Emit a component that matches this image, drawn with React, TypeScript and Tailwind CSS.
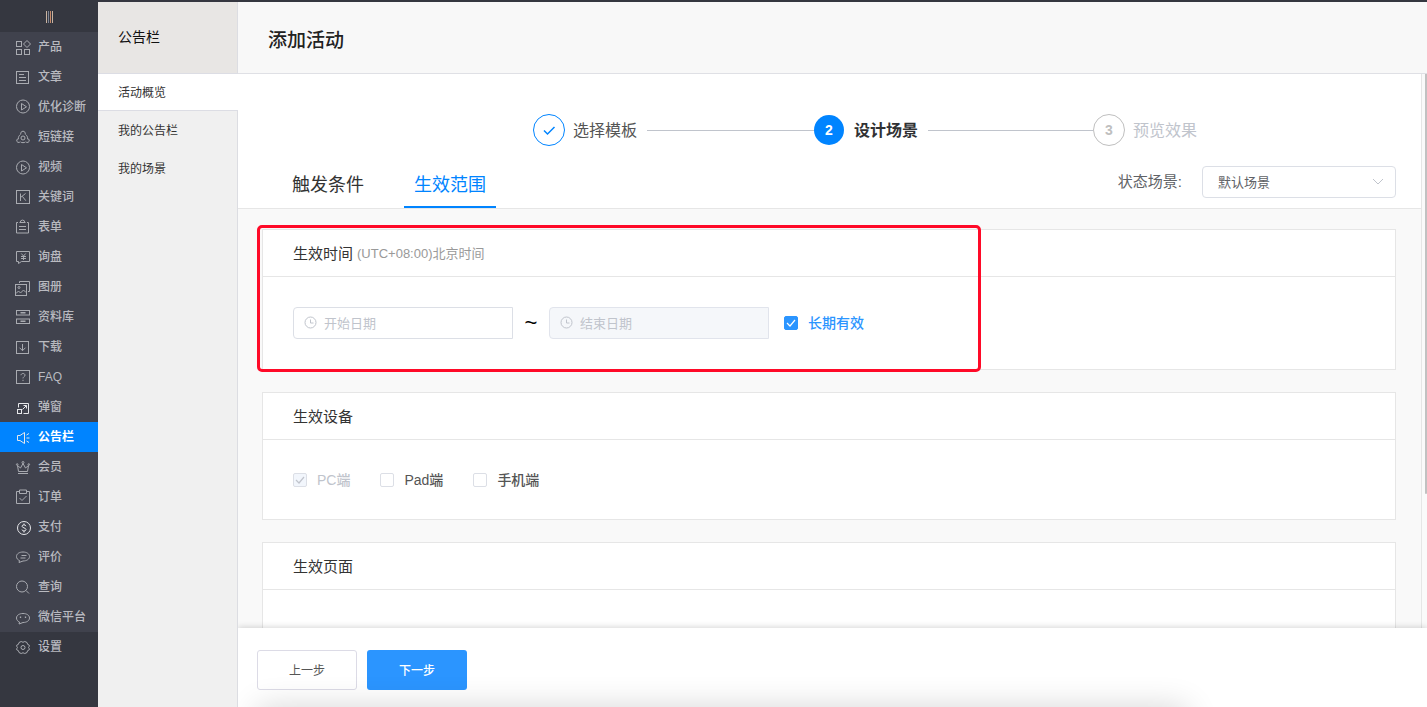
import { useState } from "react";
import type { ReactNode } from "react";

type NavItem = { label: string; icon: ReactNode; bright?: boolean };

const play = (
  <>
    <circle cx="8" cy="7.5" r="6.5" />
    <path d="M6.500 4.500v6.500l5-3.200z" />
  </>
);

const navItems: NavItem[] = [
  {
    label: "产品",
    icon: (
      <>
        <rect x="1.5" y="2.5" width="5" height="5" />
        <rect x="1.5" y="10.5" width="5" height="5" />
        <rect x="9.5" y="10.5" width="5" height="5" />
        <path d="M12 1.500l3.500 3.500-3.500 3.500L8.500 5z" />
      </>
    ),
  },
  {
    label: "文章",
    icon: (
      <>
        <rect x="1.5" y="2.5" width="12" height="12" />
        <path d="M4 5.500h5M4 8.500h7M4 11.500h7" />
      </>
    ),
  },
  { label: "优化诊断", icon: play },
  {
    label: "短链接",
    icon: (
      <>
        <circle cx="8" cy="9" r="2" />
        <path d="M5.800 5.200a2.300 2.300 0 1 1 4.400 0M5.500 5.500C4 6.500 3.300 8 3.400 9.500M10.500 5.500c1.500 1 2.200 2.500 2.100 4M5.700 13.200c1.400.6 3.200.6 4.600 0M4 9.700A1.900 1.900 0 1 0 5.300 12.500M12 9.700a1.900 1.900 0 1 1-1.300 2.800" />
      </>
    ),
  },
  { label: "视频", icon: <g transform="translate(0 1)">{play}</g> },
  {
    label: "关键词",
    icon: (
      <>
        <rect x="1.5" y="1.5" width="13" height="13" />
        <path d="M5.500 4.500v7.500M10.500 4.500L5.800 8.300M7.300 7.300l3.500 4.400" />
      </>
    ),
  },
  {
    label: "表单",
    icon: (
      <path d="M3 3.500H1.500v10.500h12V3.500H12M4.500 3.500h6M5.300 3.300a2.200 2.200 0 0 1 4.400 0M4 7.500h7M4 10.500h7" />
    ),
  },
  {
    label: "询盘",
    icon: (
      <>
        <path d="M1.500 2.500h13v10H6.500L3.500 14.500v-2h-2z" />
        <path d="M6.300 4.500L8.500 7l2.200-2.500M8.500 7v4M6 7.500h5M6 9.500h5" />
      </>
    ),
  },
  {
    label: "图册",
    icon: (
      <>
        <rect x="0.5" y="5.5" width="11" height="11" />
        <path d="M4.500 4V2.500h10v10H13M1 14.500l2.500-2.500 2 2 3-3 2.500 2.500" />
        <circle cx="4" cy="8.500" r="1" />
      </>
    ),
  },
  {
    label: "资料库",
    icon: (
      <>
        <rect x="1.5" y="1.5" width="13" height="4.500" />
        <rect x="1.5" y="10" width="13" height="4.500" />
        <path d="M5.500 3.800h5M5.500 12.200h5" strokeWidth="1.5" />
      </>
    ),
  },
  {
    label: "下载",
    icon: (
      <>
        <rect x="1.5" y="2.5" width="12" height="12" />
        <path d="M7.500 5v6.500M4.500 8.700l3 3 3-3" />
      </>
    ),
  },
  {
    label: "FAQ",
    icon: (
      <>
        <rect x="1.5" y="1.5" width="13" height="13" />
        <path d="M6 6.200c0-2.300 4-2.300 4 0 0 1.400-2 1.500-2 3.200M8 10.800V12" />
      </>
    ),
  },
  {
    label: "弹窗",
    bright: true,
    icon: (
      <>
        <rect x="2.5" y="10.5" width="4" height="4" />
        <path d="M3.500 8.500v-4h10v10h-5M7.500 10.500l4-4M8.500 6.500h3V9.500" />
      </>
    ),
  },
  {
    label: "公告栏",
    bright: true,
    icon: (
      <path d="M2.500 6.500v5h2.500l4.500 3V3.500L5 6.500zM11.500 6l2.500-1.500M11.500 9h3M11.500 12l2.500 1.500" />
    ),
  },
  {
    label: "会员",
    icon: (
      <>
        <path d="M3.500 12.500l-1-6 3 2.500L8 4.500 10.500 9l3-2.500-1 6zM3 14.500h10" />
        <circle cx="8" cy="3.500" r="1" />
        <circle cx="2.200" cy="5.500" r="0.800" />
        <circle cx="13.800" cy="5.500" r="0.800" />
      </>
    ),
  },
  {
    label: "订单",
    icon: (
      <path d="M4.500 2.500h-3v12h13v-12h-3M4.500 1h7v3.500h-7zM4.500 9l2.500 2.500L11.500 7" />
    ),
  },
  {
    label: "支付",
    bright: true,
    icon: (
      <>
        <circle cx="9" cy="9" r="6.500" />
        <path d="M11 7.200c-.2-1.800-4-1.800-4 0s4 1.500 4 3.400-4 1.800-4 0M9 4.500v1.300M9 12v1.500" />
      </>
    ),
  },
  {
    label: "评价",
    icon: (
      <path d="M4.500 11.500C2.600 10.800 1.500 9.300 1.500 7.500c0-2.700 2.800-4.500 6.500-4.500s6.500 1.800 6.500 4.500-2.800 4.500-6.500 4.500L4 13.500zM6.500 6.500h5M5.500 9h5" />
    ),
  },
  {
    label: "查询",
    icon: (
      <>
        <circle cx="7" cy="7.500" r="5.500" />
        <path d="M11 11.500l3 3" />
      </>
    ),
  },
  {
    label: "微信平台",
    icon: (
      <>
        <path d="M4.500 13C2.600 12.300 1.500 10.800 1.500 9c0-2.700 2.800-4.500 6.500-4.500s6.500 1.800 6.500 4.500-2.800 4.500-6.500 4.500L4 15z" />
        <path d="M5.500 7.500v1.500M10.500 7.500v1.500" strokeWidth="1.300" />
      </>
    ),
  },
  {
    label: "设置",
    icon: (
      <>
        <path d="M6.200 2.500Q8 4 9.800 2.500L12 3.500Q12 5.800 14.300 6.200V7.200Q12.800 8.500 14.300 9.800V10.800Q12 11.200 12 13.500L9.800 14.500Q8 13 6.200 14.500L4 13.500Q4 11.200 1.700 10.800V9.800Q3.200 8.500 1.700 7.200V6.200Q4 5.800 4 3.500Z" />
        <circle cx="8" cy="8.500" r="2" />
      </>
    ),
  },
];

function SideIcon({ children }: { children: ReactNode }) {
  return (
    <svg viewBox="0 0 16 16" className="size-4 shrink-0 overflow-visible" fill="none" stroke="currentColor" strokeWidth="1" aria-hidden="true">
      {children}
    </svg>
  );
}

function SideNav() {
  return (
    <nav className="flex w-[98px] shrink-0 flex-col bg-[#353740] text-xs font-medium text-[#b9bac0]">
      <button type="button" aria-label="菜单" className="flex h-[30px] items-center justify-center gap-px">
        <span className="h-3 w-px bg-[#c9b3a0]" />
        <span className="h-3 w-px bg-[#7d8596]" />
        <span className="h-3 w-px bg-[#c88a6a]" />
        <span className="h-3 w-px bg-[#c9b3a0]" />
      </button>
      {navItems.map((item) => {
        const active = item.label === "公告栏";
        const last = item.label === "设置";
        return (
          <a
            key={item.label}
            href="#"
            className={
              active
                ? "flex h-[30px] items-center gap-[7px] bg-[#0084ff] pl-[15px] font-bold text-white"
                : last
                  ? "flex h-[30px] items-center gap-[7px] pl-[15px]"
                  : "flex h-[30px] items-center gap-[7px] bg-[#40424d] pl-[15px]"
            }
          >
            <span className={item.bright ? "text-[#e6e7ea]" : "text-[#a9abb1]"}>
              <SideIcon>{item.icon}</SideIcon>
            </span>
            {item.label}
          </a>
        );
      })}
    </nav>
  );
}

function SubNav() {
  return (
    <aside className="flex w-[140px] shrink-0 flex-col border-r border-[#dcdde2] bg-[#f0f0f0] text-xs text-[#333]">
      <h2 className="flex h-[72px] items-center border-b border-[#dcdde4] bg-[#e8e6e4] pb-0.5 pl-5 text-sm text-[#111]">公告栏</h2>
      <a href="#" className="-mr-px flex h-[37px] items-center border-b border-[#dcdde4] bg-white pt-0.5 pl-5">
        活动概览
      </a>
      <a href="#" className="flex h-[38px] items-center pt-0.5 pl-5">
        我的公告栏
      </a>
      <a href="#" className="flex h-[38px] items-center pt-0.5 pl-5">
        我的场景
      </a>
    </aside>
  );
}

function Steps() {
  return (
    <ol className="flex items-center justify-center pt-10 pl-[71px] text-base">
      <li className="flex items-center">
        <span className="flex size-8 items-center justify-center rounded-full border border-[#0084ff] text-[#0084ff]">
          <svg viewBox="0 0 14 14" className="size-3.5" fill="none" stroke="currentColor" strokeWidth="1.5" aria-hidden="true">
            <path d="M2 7.500l3.500 3.500L12.500 4" />
          </svg>
        </span>
        <span className="ml-2 pt-0.5 text-[#555]">选择模板</span>
        <span className="ml-2.5 h-px w-[167px] bg-[#c0c4cc]" />
      </li>
      <li className="flex items-center">
        <span className="flex size-[30px] items-center justify-center rounded-full bg-[#0084ff] text-sm font-bold text-white">2</span>
        <span className="ml-2.5 pt-0.5 font-bold text-[#303133]">设计场景</span>
        <span className="ml-2.5 h-px w-[165px] bg-[#c0c4cc]" />
      </li>
      <li className="flex items-center">
        <span className="flex size-8 items-center justify-center rounded-full border border-[#bfbfbf] text-sm font-bold text-[#bfbfbf]">3</span>
        <span className="ml-2 pt-0.5 text-[#c0c4cc]">预览效果</span>
      </li>
    </ol>
  );
}

function Card({ title, note, children }: { title: string; note?: string; children?: ReactNode }) {
  return (
    <section className="relative border border-[#e6e6e6] bg-white">
      <h3 className="flex h-[47px] items-center gap-1 border-b border-[#e6e6e6] pt-0.5 pl-[30px] text-[15px] text-[#333]">
        {title}
        {note && <span className="text-[13px] text-[#999]">{note}</span>}
      </h3>
      {children}
    </section>
  );
}

function DateField({ label, disabled }: { label: string; disabled?: boolean }) {
  return (
    <label
      className={
        disabled
          ? "flex h-8 w-[220px] items-center gap-1.5 rounded-l border border-[#e1e4ec] bg-[#f5f7fa] pl-2.5"
          : "flex h-8 w-[220px] items-center gap-1.5 rounded-l border border-[#dcdfe6] bg-white pl-2.5"
      }
    >
      <svg viewBox="0 0 14 14" className="size-3.5 shrink-0 text-[#c0c4cc]" fill="none" stroke="currentColor" aria-hidden="true">
        <circle cx="6.500" cy="6.500" r="5.500" />
        <path d="M6.500 3.500v3.500h3" />
      </svg>
      <input
        type="text"
        aria-label={label}
        placeholder={label}
        disabled={disabled}
        className="min-w-0 flex-1 bg-transparent pt-0.5 text-[13px] text-[#606266] outline-none placeholder:text-[#c0c4cc]"
      />
    </label>
  );
}

function Check({ label, initial, disabled, accent }: { label: string; initial?: boolean; disabled?: boolean; accent?: boolean }) {
  const [on, setOn] = useState(Boolean(initial));
  return (
    <label
      className={
        disabled
          ? "flex items-center gap-2.5 text-sm font-medium text-[#c0c4cc]"
          : accent
            ? "flex items-center gap-2.5 text-sm font-medium text-[#2b95ff]"
            : "flex items-center gap-2.5 text-sm font-medium text-[#555]"
      }
    >
      <span className="relative flex size-3.5">
        <input
          type="checkbox"
          checked={on}
          disabled={disabled}
          onChange={(e) => setOn(e.target.checked)}
          className="size-3.5 appearance-none rounded-[2px] border border-[#dcdfe6] bg-white enabled:checked:border-[#2b95ff] enabled:checked:bg-[#2b95ff] disabled:bg-[#f2f6fc]"
        />
        {on && (
          <svg
            viewBox="0 0 14 14"
            className={disabled ? "pointer-events-none absolute inset-0 text-[#c0c4cc]" : "pointer-events-none absolute inset-0 text-white"}
            fill="none"
            stroke="currentColor"
            strokeWidth="1.2"
            aria-hidden="true"
          >
            <path d="M3 7l3 3 5-6" />
          </svg>
        )}
      </span>
      {label}
    </label>
  );
}

export default function App() {
  return (
    <div className="flex h-screen flex-col overflow-hidden bg-white font-['Liberation_Sans','Noto_Sans_CJK_SC',sans-serif]">
      <div className="h-0.5 shrink-0 bg-[#353740]" />
      <div className="flex min-h-0 flex-1">
        <SideNav />
        <SubNav />
        <main className="flex min-w-0 flex-1 flex-col overflow-hidden">
          <header className="flex h-[72px] shrink-0 items-center border-b border-[#dfe0e5] bg-[#f8f8f8] pt-2 pl-[30px]">
            <h1 className="text-[19px] font-medium text-[#222]">添加活动</h1>
          </header>
          <div className="flex min-h-0 flex-1 overflow-hidden">
            <div className="min-w-0 flex-1 overflow-hidden border-r border-[#e6e6e6] bg-[#f9f9f9]">
              <div className="border-b border-[#e6e6e6] bg-white">
                <Steps />
                <div className="mt-5 flex items-start justify-between pr-[25px] pl-11">
                  <div role="tablist" className="flex gap-[30px] text-lg">
                    <button type="button" role="tab" aria-selected="false" className="h-[42px] border-b-2 border-transparent px-2.5 pb-0.5 text-[#333]">
                      触发条件
                    </button>
                    <button type="button" role="tab" aria-selected="true" className="h-[42px] border-b-2 border-[#0084ff] px-2.5 pb-0.5 text-[#0084ff]">
                      生效范围
                    </button>
                  </div>
                  <div className="flex items-center gap-5">
                    <label htmlFor="scene" className="text-[15px] text-[#606266]">
                      状态场景:
                    </label>
                    <div className="relative">
                      <select id="scene" className="h-8 w-[194px] appearance-none rounded border border-[#dcdfe6] bg-white pt-0.5 pl-[15px] text-[13px] text-[#606266]">
                        <option>默认场景</option>
                      </select>
                      <svg viewBox="0 0 12 12" className="pointer-events-none absolute top-2.5 right-3 size-3 text-[#c0c4cc]" fill="none" stroke="currentColor" aria-hidden="true">
                        <path d="M1 3l5 5 5-5" />
                      </svg>
                    </div>
                  </div>
                </div>
              </div>
              <div className="flex flex-col gap-[22px] pt-5 pr-[25px] pl-6">
                <Card title="生效时间" note="(UTC+08:00)北京时间">
                  <div className="flex items-center px-[30px] py-[30px]">
                    <DateField label="开始日期" />
                    <span className="w-9 text-center text-[22px] leading-8 text-black">~</span>
                    <DateField label="结束日期" disabled />
                    <div className="ml-[15px]">
                      <Check label="长期有效" initial accent />
                    </div>
                  </div>
                  <div className="pointer-events-none absolute -top-[5px] -left-1.5 h-[147px] w-[724px] rounded-[5px] border-3 border-[#ff0a28]" />
                </Card>
                <Card title="生效设备">
                  <div className="flex h-[79px] items-center gap-[30px] px-[30px]">
                    <Check label="PC端" initial disabled />
                    <Check label="Pad端" />
                    <Check label="手机端" />
                  </div>
                </Card>
                <Card title="生效页面">
                  <div className="h-20" />
                </Card>
              </div>
            </div>
            <div className="flex w-[5px] shrink-0 justify-end bg-[#fafafa]">
              <div className="h-[420px] w-0.5 rounded-b-sm bg-[#c1c1c1]" />
            </div>
          </div>
          <footer className="relative flex shrink-0 items-center gap-2.5 bg-white px-[19px] pt-[22px] pb-[17px] text-xs shadow-[0_-1px_6px_rgba(0,0,0,0.16)]">
            <button type="button" className="h-10 w-[100px] rounded-[3px] border border-[#dcdbe6] pt-0.5 text-[#555]">
              上一步
            </button>
            <button type="button" className="h-10 w-[100px] rounded-[3px] bg-[#2b95ff] pt-0.5 font-medium text-white">
              下一步
            </button>
            <div className="pointer-events-none absolute top-full right-[240px] left-5 h-10 shadow-[0_0_32px_rgba(0,0,0,0.16)]" />
          </footer>
        </main>
      </div>
    </div>
  );
}
